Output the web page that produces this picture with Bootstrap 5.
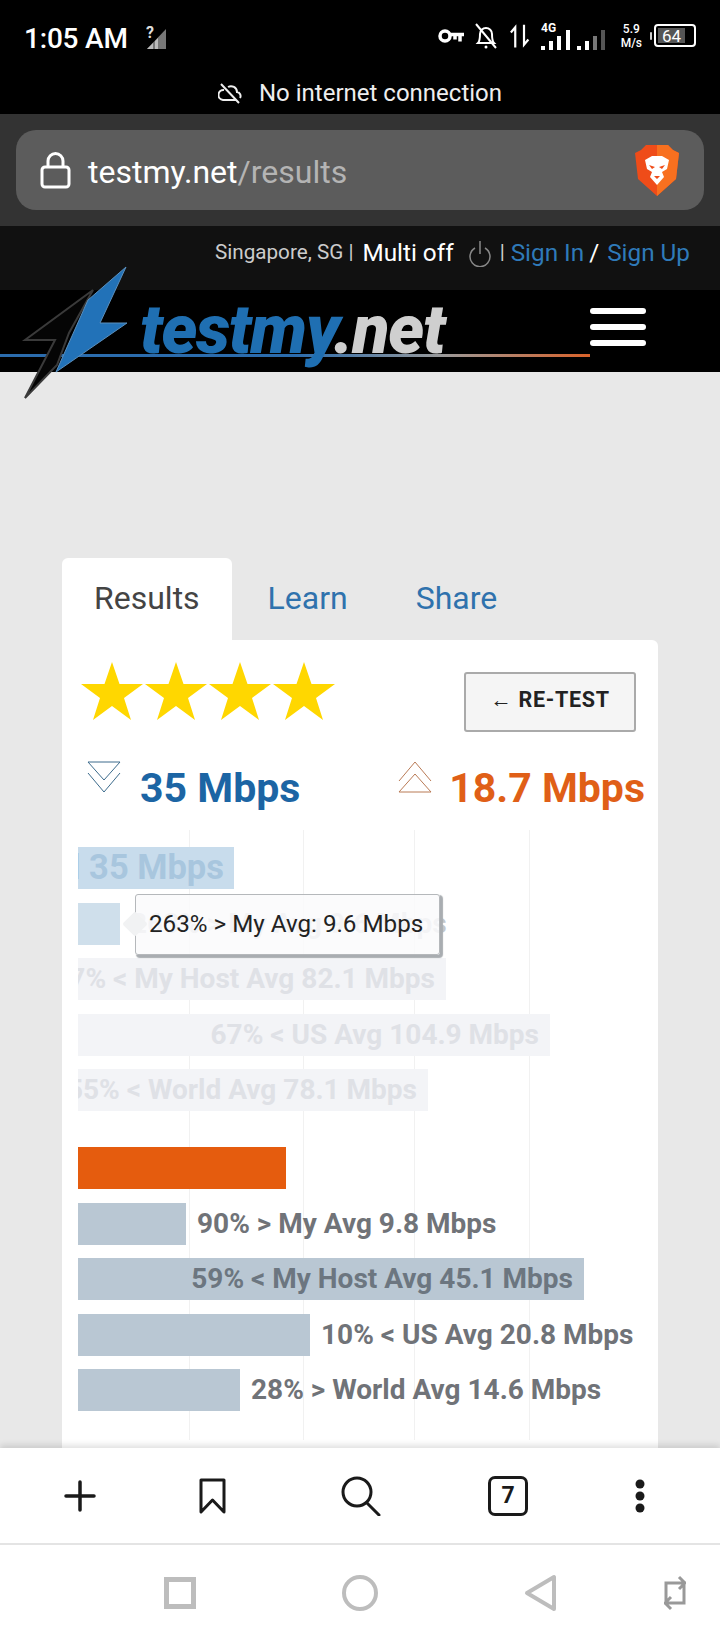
<!DOCTYPE html>
<html lang="en">
<head>
    <meta charset="UTF-8">
    <meta name="viewport" content="width=device-width, initial-scale=1.0">
    <title>testmy.net results</title>
    <link href="https://cdn.jsdelivr.net/npm/bootstrap@5.3.3/dist/css/bootstrap.min.css" rel="stylesheet">
    <style>
        html, body { height: 1640px; overflow: hidden; }
        body { font-family: Roboto, "Liberation Sans", sans-serif; background: #e8e8e8; color: #222; }
        svg { display: block; flex: none; }

        /* phone + browser chrome */
        .status-row { height: 72px; background: #000; color: #fff; padding: 0 24px; }
        .status-time { font-size: 28px; font-weight: 500; letter-spacing: -.2px; margin: 6px 18px 0 0; }
        .status-signal { margin-top: 4px; }
        .status-speed { font-size: 12px; line-height: 14px; font-weight: 500; text-align: center; }
        .offline-row { height: 42px; background: #000; color: #eee; font-size: 24px; gap: 17px; }
        .url-wrap { height: 112px; background: #333; padding: 16px 16px; }
        .url-pill { height: 80px; background: #5c5c5c; border-radius: 20px; padding: 0 24px; }
        .url-host { color: #fff; font-size: 32px; margin: 3px 0 0 17px; }
        .url-path { color: #b4b4b4; }

        /* site header */
        .site-topbar { height: 64px; background: #111; color: #ccc; font-size: 20.7px; padding: 0 30px 10px 0; }
        .site-topbar a { color: #2f7ab9; font-size: 24.300px; text-decoration: none; }
        .multi-off { color: #fff; font-size: 24.300px; margin: 0 14px 0 9px; }
        .site-sep { margin: 0 6px 0 8px; }
        .site-slash { color: #fff; font-size: 24.300px; margin: 0 8px 0 5px; }
        .site-navbar { height: 82px; background: #000; padding: 0; }
        .logo-line { position: absolute; left: 0; top: 64px; width: 590px; height: 3px; background: linear-gradient(90deg, #2b6cad 0%, #2b6cad 50%, #9a9a9a 75%, #d9622a 100%); }
        .logo-bolt { position: absolute; left: 20px; top: -25px; z-index: 5; }
        .logo-text { position: absolute; left: 140px; top: 0; font-size: 68px; line-height: 80px; font-weight: 900; font-style: italic; color: #1f6fb2; letter-spacing: -1.200px; }
        .logo-text span { color: #cfcfcf; }
        .burger { position: absolute; left: 590px; top: 18px; width: 56px; }
        .burger i { display: block; height: 6px; background: #fff; border-radius: 3px; margin-bottom: 10px; }

        /* results panel */
        .page-main { height: 1076px; overflow: hidden; padding: 186px 62px 0; }
        .result-tabs { border: 0; height: 82px; }
        .result-tabs .nav-link { font-size: 32px; line-height: 80px; height: 82px; padding: 0 34px; border: 0; border-radius: 6px 6px 0 0; color: #2f72ad; margin: 0; }
        .result-tabs .nav-link.active { background: #fff; color: #444; padding: 0 32px; margin-right: 2px; }
        .result-panel { background: #fff; border-radius: 0 6px 0 0; padding: 22px 13px 0 16px; height: 900px; border: 0; }
        .star-row { margin-left: 2px; }
        .retest-btn { width: 172px; height: 60px; background: #f5f5f5; border: 2px solid #aaa; border-radius: 3px; font-size: 21.5px; font-weight: 700; letter-spacing: .7px; color: #222; padding: 0 0 4px; margin: 10px 9px 0 0; }
        .speed-row { margin-top: 29px; height: 48px; }
        .speed-value { font-size: 41px; font-weight: 700; line-height: 48px; margin-top: 3px; }
        .speed-down { color: #1c65a4; margin-left: 2px; }
        .speed-up { color: #e05f17; }

        /* bar chart */
        .chart-area { position: relative; height: 610px; margin-top: 21px; padding-top: 17px;
            background:
                linear-gradient(#f1f1f1, #f1f1f1) 111px 0 / 1px 100% no-repeat,
                linear-gradient(#f1f1f1, #f1f1f1) 225px 0 / 1px 100% no-repeat,
                linear-gradient(#f1f1f1, #f1f1f1) 336px 0 / 1px 100% no-repeat,
                linear-gradient(#f1f1f1, #f1f1f1) 451px 0 / 1px 100% no-repeat; }
        .bar-group { display: flex; flex-direction: column; gap: 13.5px; }
        .bar-group + .bar-group { margin-top: 36px; }
        .bar-row { display: flex; align-items: center; height: 42px; font-size: 28px; font-weight: 700; white-space: nowrap; }
        .bar-fill { height: 42px; flex: none; display: flex; align-items: center; justify-content: flex-end; overflow: hidden; padding-right: 11px; }
        .bar-label { margin-left: 11px; }
        .bar-title { font-size: 34.500px; padding-right: 10px; }
        .dl-main { background: #c8dcec; color: #a8c6de; }
        .dl-mine { background: #cfdfeb; }
        .dl-mine-text { color: #c3c8cd; }
        .dl-other { background: #f3f4f7; color: #dfe1e6; }
        .ul-main { background: #e55c0e; }
        .ul-other { background: #b9c7d3; color: #6c7680; }
        .ul-text { color: #707378; }
        .chart-tip { position: absolute; left: 57px; top: 64px; width: 305px; height: 61px; background: rgba(250,250,251,.86); border: 1px solid #b5b8bb; border-radius: 3px; box-shadow: 2px 2px 1px 1px #a9adb1; font-size: 24.200px; line-height: 59px; padding-left: 13px; white-space: nowrap; }
        .chart-tip::before { content: ""; position: absolute; left: -10px; top: 20px; width: 18px; height: 18px; background: #f1f2f3; transform: rotate(45deg); border-radius: 2px; }
        .tip-text { position: relative; color: #222; }

        /* phone bottom bars */
        .browser-tools { height: 97px; background: #fff; position: relative; box-shadow: 0 -3px 6px rgba(0,0,0,.12); border-bottom: 2px solid #e4e4e4; }
        .tool-slot { position: absolute; top: 0; height: 95px; display: flex; align-items: center; justify-content: center; }
        .tab-count { width: 40px; height: 40px; border: 3px solid #1a1a1a; border-radius: 7px; font-size: 23px; font-weight: 700; line-height: 34px; text-align: center; color: #1a1a1a; }
        .android-nav { height: 95px; background: #fff; position: relative; }
    </style>
</head>
<body>
    <div class="status-row d-flex align-items-center">
        <span class="status-time">1:05 AM</span>
        <svg class="status-signal" width="22" height="24" viewBox="0 0 22 24"><text x="0" y="12" fill="#ddd" font-size="16" font-weight="700" font-family="Roboto">?</text><path d="M1 23 20 3v20z" fill="#777"/><path d="M1 23l6-6v6zM9 23v-8l3-3v11z" fill="#bbb"/></svg>
        <div class="ms-auto d-flex align-items-center">
            <svg width="26" height="16" viewBox="0 0 26 16" fill="none" stroke="#fff" stroke-width="3.500"><circle cx="7" cy="8" r="5"/><path d="M12 6.500h14M22 6.500v7M17 6.500v5"/></svg>
            <svg style="margin-left:10px" width="24" height="28" viewBox="0 0 24 28" fill="none" stroke="#fff" stroke-width="2"><path d="M4 21c2-2 2-4 2-9a6 6 0 0 1 12 0c0 5 0 7 2 9zM2 2l20 24"/><circle cx="12" cy="25" r="1.500" fill="#fff" stroke="none"/></svg>
            <svg style="margin-left:12px" width="21" height="26" viewBox="0 0 24 26" fill="none" stroke="#fff" stroke-width="2.500"><path d="M6 26V3L1 9M16 0v23l5-6"/></svg>
            <svg class="ms-2" width="66" height="34" viewBox="0 0 66 34" fill="#fff"><text x="2" y="13" font-size="12" font-weight="700" font-family="Roboto">4G</text><rect x="2" y="27" width="4" height="4"/><rect x="10" y="22" width="4" height="9"/><rect x="18" y="17" width="4" height="14"/><rect x="27" y="11" width="4" height="20"/><rect x="38" y="27" width="4" height="4"/><rect x="46" y="22" width="4" height="9"/><rect x="54" y="17" width="4" height="14" fill="#777"/><rect x="62" y="11" width="4" height="20" fill="#555"/></svg>
            <div class="status-speed ms-3">5.9<br>M/s</div>
            <svg class="ms-2" width="46" height="24" viewBox="0 0 46 24"><rect x="0" y="8" width="2" height="8" rx="1" fill="#ccc"/><rect x="5" y="1" width="40" height="21" rx="3" fill="none" stroke="#fff" stroke-width="2"/><rect x="8" y="4" width="27" height="15" fill="#555"/><text x="12" y="18" font-size="17" fill="#fff" font-family="Roboto">64</text></svg>
        </div>
    </div>
    <div class="offline-row d-flex align-items-center justify-content-center">
        <svg width="24" height="24" viewBox="0 0 24 24" fill="none" stroke="#eee" stroke-width="2"><path d="M6 9a5 5 0 0 0-1 10h13M10 6a6 6 0 0 1 9 5 4 4 0 0 1 3 6M3 3l18 19"/></svg>
        <span>No internet connection</span>
    </div>

    <div class="url-wrap">
        <div class="url-pill d-flex align-items-center">
            <svg width="31" height="37" viewBox="0 0 31 37" fill="none" stroke="#fff" stroke-width="3"><rect x="2" y="15" width="27" height="20" rx="3"/><path d="M8 15V9a7.500 7.500 0 0 1 15 0v6"/></svg>
            <span class="url-host">testmy.net<span class="url-path">/results</span></span>
            <svg class="ms-auto" width="46" height="54" viewBox="0 0 46 54"><path d="M12 2h22l5 5 6 3-3 26-19 17L4 36 1 10l6-3z" fill="#ef4c19"/><path d="M34 2l5 5 6 3-3 26-19 17V2z" fill="#f8701f"/><path d="M11 17l7-4h10l7 4-2 9-5 3 2 5-7 8-7-8 2-5-5-3z" fill="#fff"/><path d="M18 26l-3-4 6 2zM28 26l3-4-6 2zM20 33h6l-3 3z" fill="#ef4c19"/></svg>
        </div>
    </div>

    <div class="site-topbar d-flex align-items-center justify-content-end">
        <span>Singapore, SG |</span>
        <span class="multi-off">Multi off</span>
        <svg width="24" height="28" viewBox="0 0 24 28" fill="none" stroke="#888" stroke-width="1.500"><path d="M7 9a10 10 0 1 0 10 0M12 2v13"/></svg>
        <span class="site-sep">|</span>
        <a href="#">Sign In</a>
        <span class="site-slash">/</span>
        <a href="#">Sign Up</a>
    </div>

    <nav class="navbar site-navbar position-relative d-block">
        <div class="logo-line"></div>
        <span class="logo-text">testmy<span>.net</span></span>
        <svg class="logo-bolt" width="110" height="135" viewBox="0 0 110 135">
            <path d="M73 25 5 75h30L5 133l32-33 12-32z" fill="#050505" stroke="#3a3a3a" stroke-width="2"/>
            <path d="M106 2 80 58h27L36 107 68 35z" fill="#2272b8" stroke="#5b8fbc" stroke-width="1"/>
        </svg>
        <div class="burger"><i></i><i></i><i></i></div>
    </nav>

    <main class="page-main">
        <ul class="nav nav-tabs result-tabs">
            <li class="nav-item"><a class="nav-link active" href="#">Results</a></li>
            <li class="nav-item"><a class="nav-link" href="#">Learn</a></li>
            <li class="nav-item"><a class="nav-link" href="#">Share</a></li>
        </ul>
        <div class="card result-panel">
            <div class="d-flex justify-content-between align-items-start">
                <div class="d-flex star-row">
                    <svg width="64" height="58" viewBox="0 0 64 58"><path d="M32 0l7.500 22H63L44 36l7 22-19-14-19 14 7-22L1 22h23.500z" fill="#ffd700"/></svg>
                    <svg width="64" height="58" viewBox="0 0 64 58"><path d="M32 0l7.500 22H63L44 36l7 22-19-14-19 14 7-22L1 22h23.500z" fill="#ffd700"/></svg>
                    <svg width="64" height="58" viewBox="0 0 64 58"><path d="M32 0l7.500 22H63L44 36l7 22-19-14-19 14 7-22L1 22h23.500z" fill="#ffd700"/></svg>
                    <svg width="64" height="58" viewBox="0 0 64 58"><path d="M32 0l7.500 22H63L44 36l7 22-19-14-19 14 7-22L1 22h23.500z" fill="#ffd700"/></svg>
                </div>
                <button type="button" class="btn retest-btn">&larr; RE-TEST</button>
            </div>
            <div class="d-flex speed-row">
                <svg class="ms-2 me-3" width="36" height="32" viewBox="0 0 36 32" fill="none" stroke="#3c6b8c" stroke-width="1"><path d="M2 1h32L18 19zM2 12l16 19 16-19"/></svg>
                <span class="speed-value speed-down">35 Mbps</span>
                <svg class="ms-auto me-3" width="36" height="32" viewBox="0 0 36 32" fill="none" stroke="#b97a55" stroke-width="1"><path d="M2 31h32L18 13zM2 20 18 1l16 19"/></svg>
                <span class="speed-value speed-up">18.7 Mbps</span>
            </div>

            <div class="chart-area">
                <div class="bar-group">
                    <div class="bar-row"><div class="bar-fill bar-title dl-main" style="width:156px">Download 35 Mbps</div></div>
                    <div class="bar-row"><div class="bar-fill dl-mine" style="width:42px"></div><span class="bar-label dl-mine-text">263% &gt; My Avg 9.6 Mbps</span></div>
                    <div class="bar-row"><div class="bar-fill dl-other" style="width:368px">57% &lt; My Host Avg 82.1 Mbps</div></div>
                    <div class="bar-row"><div class="bar-fill dl-other" style="width:472px">67% &lt; US Avg 104.9 Mbps</div></div>
                    <div class="bar-row"><div class="bar-fill dl-other" style="width:350px">55% &lt; World Avg 78.1 Mbps</div></div>
                </div>
                <div class="bar-group">
                    <div class="bar-row"><div class="bar-fill ul-main" style="width:208px"></div></div>
                    <div class="bar-row"><div class="bar-fill ul-other" style="width:108px"></div><span class="bar-label ul-text">90% &gt; My Avg 9.8 Mbps</span></div>
                    <div class="bar-row"><div class="bar-fill ul-other" style="width:506px">59% &lt; My Host Avg 45.1 Mbps</div></div>
                    <div class="bar-row"><div class="bar-fill ul-other" style="width:232px"></div><span class="bar-label ul-text">10% &lt; US Avg 20.8 Mbps</span></div>
                    <div class="bar-row"><div class="bar-fill ul-other" style="width:162px"></div><span class="bar-label ul-text">28% &gt; World Avg 14.6 Mbps</span></div>
                </div>
                <div class="chart-tip"><span class="tip-text">263% &gt; My Avg: 9.6 Mbps</span></div>
            </div>
        </div>
    </main>

    <div class="browser-tools">
        <div class="tool-slot" style="left:60px;width:40px"><svg width="32" height="32" viewBox="0 0 32 32" stroke="#1a1a1a" stroke-width="3.500" stroke-linecap="round"><path d="M16 2v28M2 16h28"/></svg></div>
        <div class="tool-slot" style="left:192px;width:40px"><svg width="27" height="36" viewBox="0 0 27 36" fill="none" stroke="#1a1a1a" stroke-width="3" stroke-linejoin="round"><path d="M2 2h23v32l-11.500-12L2 34z"/></svg></div>
        <div class="tool-slot" style="left:340px;width:42px"><svg width="40" height="40" viewBox="0 0 40 40" fill="none" stroke="#1a1a1a" stroke-width="3" stroke-linecap="round"><circle cx="16" cy="16" r="14"/><path d="M26 27l12 12"/></svg></div>
        <div class="tool-slot" style="left:488px;width:40px"><div class="tab-count">7</div></div>
        <div class="tool-slot" style="left:630px;width:20px"><svg width="10" height="34" viewBox="0 0 10 34" fill="#1a1a1a"><circle cx="5" cy="5" r="4.500"/><circle cx="5" cy="17" r="4.500"/><circle cx="5" cy="29" r="4.500"/></svg></div>
    </div>
    <div class="android-nav">
        <div class="tool-slot" style="left:160px;width:40px"><svg width="32" height="32" viewBox="0 0 32 32" fill="none" stroke="#bdbdbd" stroke-width="5"><rect x="2.500" y="2.500" width="27" height="27"/></svg></div>
        <div class="tool-slot" style="left:340px;width:40px"><svg width="36" height="36" viewBox="0 0 36 36" fill="none" stroke="#bdbdbd" stroke-width="4"><circle cx="18" cy="18" r="16"/></svg></div>
        <div class="tool-slot" style="left:520px;width:40px"><svg width="32" height="38" viewBox="0 0 32 38" fill="none" stroke="#bdbdbd" stroke-width="4" stroke-linejoin="round"><path d="M30 3v32L3 19z"/></svg></div>
        <div class="tool-slot" style="left:660px;width:30px"><svg width="22" height="36" viewBox="0 0 22 36" fill="none" stroke="#999" stroke-width="3"><path d="M2 30V8h18M15 2l6 6-6 6M20 6v22H2M7 22l-6 6 6 6"/></svg></div>
    </div>

    <script src="https://cdn.jsdelivr.net/npm/bootstrap@5.3.3/dist/js/bootstrap.bundle.min.js"></script>
</body>
</html>
